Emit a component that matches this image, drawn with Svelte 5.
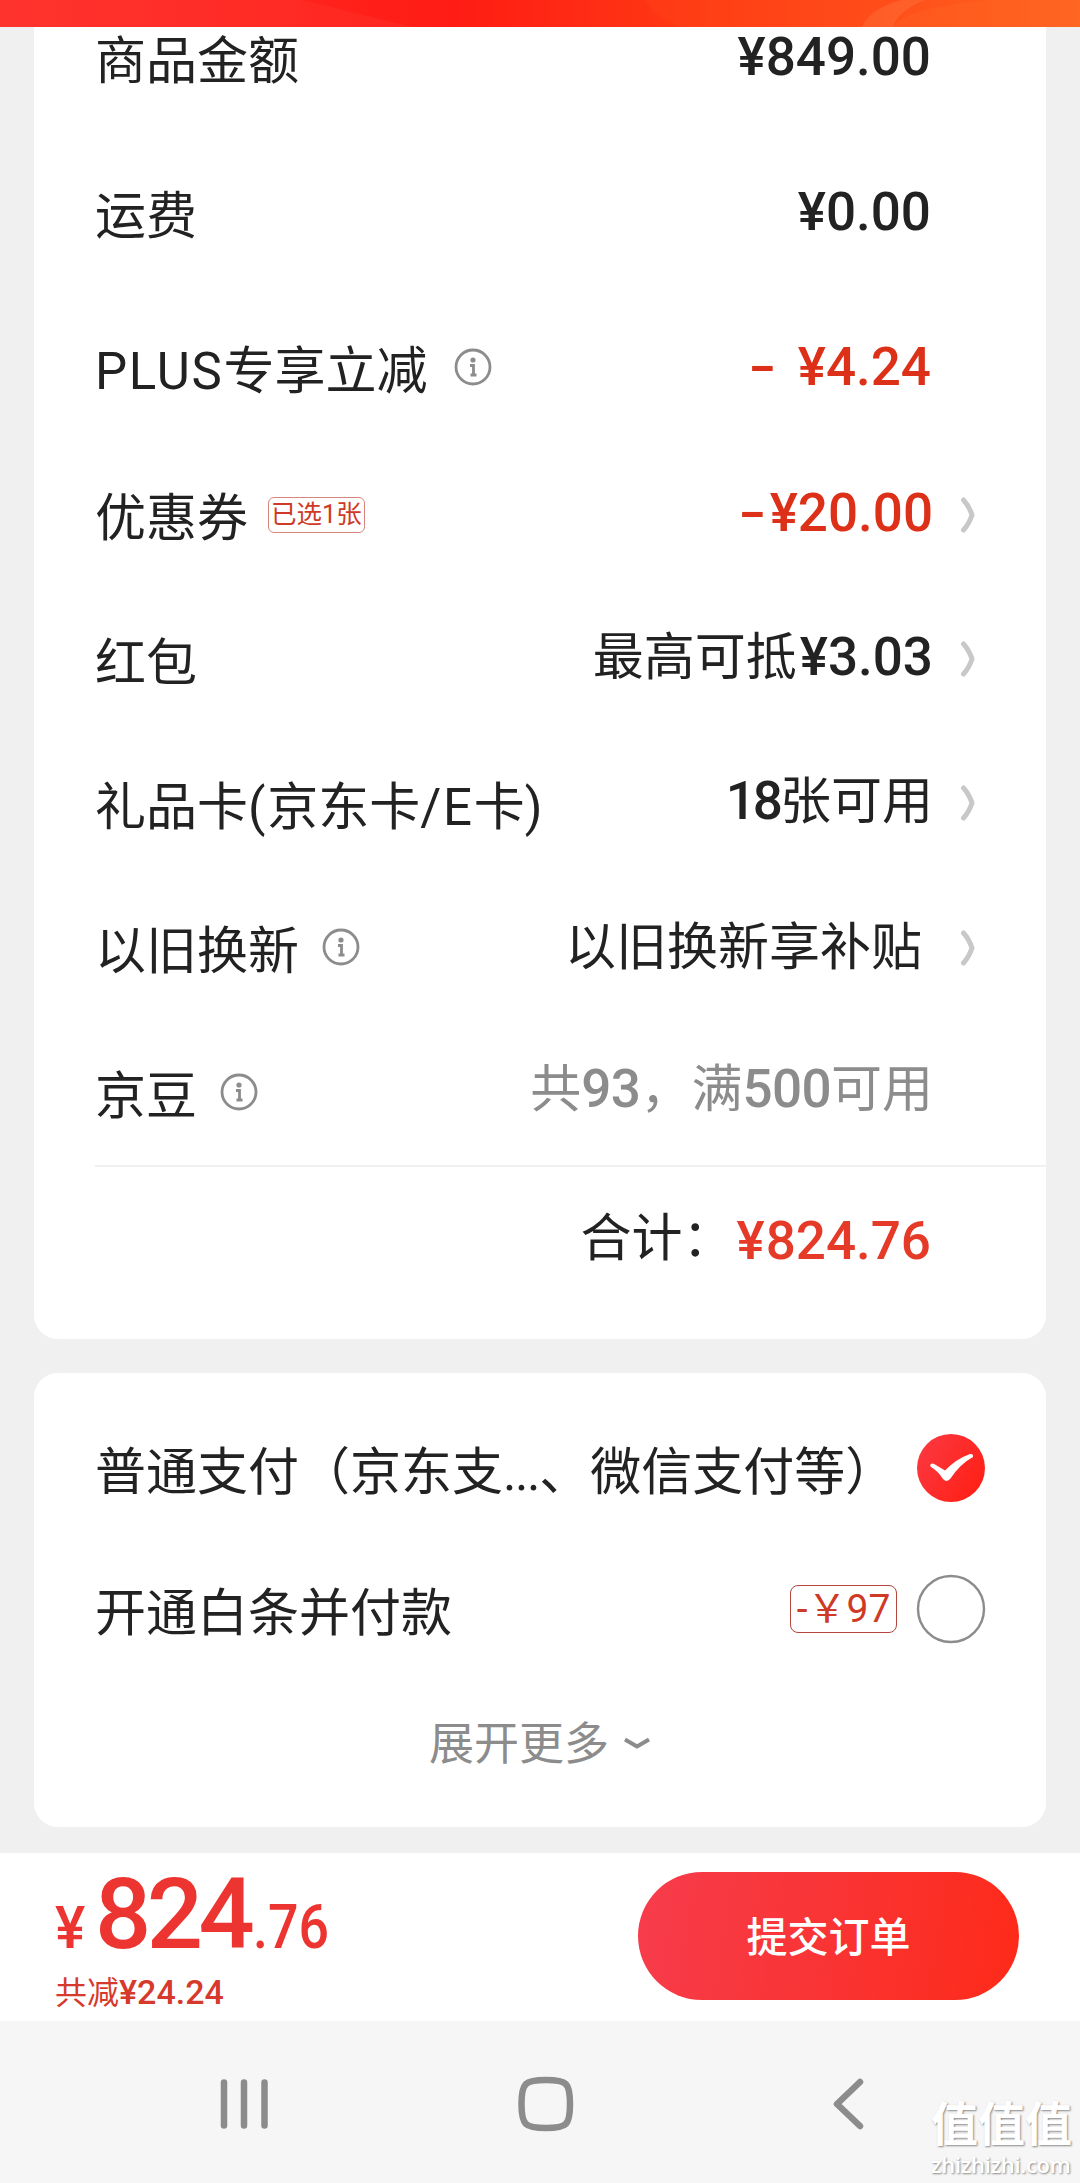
<script lang="ts">
  interface Row {
    label: string;
    info?: boolean;
    tag?: string;
    minus?: '-' | '- ';
    // runs of the value, numbers are set in the heavier face
    value: { text: string; num?: boolean }[];
    tone?: 'red' | 'grey';
    arrow?: boolean;
    inset?: boolean;
  }

  const amounts: Row[] = [
    { label: '商品金额', value: [{ text: '¥849.00', num: true }] },
    { label: '运费', value: [{ text: '¥0.00', num: true }] },
    { label: 'PLUS专享立减', info: true, minus: '- ', value: [{ text: '¥4.24', num: true }], tone: 'red' },
  ];

  const deductions: Row[] = [
    { label: '优惠券', tag: '已选1张', minus: '-', value: [{ text: '¥20.00', num: true }], tone: 'red', arrow: true },
    { label: '红包', value: [{ text: '最高可抵' }, { text: '¥3.03', num: true }], arrow: true },
    { label: '礼品卡(京东卡/E卡)', value: [{ text: '18', num: true }, { text: '张可用' }], arrow: true },
    { label: '以旧换新', info: true, value: [{ text: '以旧换新享补贴' }], arrow: true, inset: true },
    {
      label: '京豆',
      info: true,
      value: [
        { text: '共' },
        { text: '93', num: true },
        { text: '，满' },
        { text: '500', num: true },
        { text: '可用' },
      ],
      tone: 'grey',
    },
  ];

  let method = $state('normal');

  // split a label into latin and CJK runs, latin is spaced a little wider
  const runs = (s: string) => s.match(/[\x21-\x7e]+|[^\x21-\x7e]+/g) ?? [];
</script>

{#snippet line(row: Row)}
  <div class="row">
    <div class="label">
      <span class="text">{#each runs(row.label) as run}<span class:latin={run < '\x7f'}>{run}</span>{/each}</span>
      {#if row.tag}<span class="tag">{row.tag}</span>{/if}
      {#if row.info}
        <svg class="info" viewBox="0 0 38 38" width="38" height="38">
          <circle cx="19" cy="19" r="17" />
          <circle class="dot" cx="19" cy="12" r="2.6" />
          <path d="M16 17.5h3.5v9M16.5 27h6" />
        </svg>
      {/if}
    </div>
    <div class="value {row.tone ?? ''}" class:inset={row.inset}>
      {#if row.minus}<span class="num minus" class:apart={row.minus === '- '}>-</span>{/if}{#each row.value as part}<span class:num={part.num} class:tight={part.text === '18'} class:yuan={part.text[0] === '¥'}>{part.text}</span>{/each}
    </div>
    <div class="arrow">
      {#if row.arrow}
        <svg viewBox="0 0 16 36" width="16" height="36"><path d="M3.5 3Q9 9 12 18Q9 27 3.5 33" /></svg>
      {/if}
    </div>
  </div>
{/snippet}

<div class="screen">
  <header>
    <svg viewBox="0 0 1080 27" width="1080" height="27" preserveAspectRatio="none">
      <path d="M300 0C340 8 370 18 415 27H0V0Z" fill="#ff3a36" opacity=".3" />
      <path d="M645 0C650 10 662 20 680 27H860C866 14 880 5 900 0Z" fill="#ff4a16" opacity=".25" />
      <path d="M862 27C868 14 882 5 902 0H925C905 8 896 17 893 27Z" fill="#ff7a45" opacity=".35" />
      <path d="M893 27C900 14 935 5 990 0H1080V27Z" fill="#ff6a28" opacity=".25" />
    </svg>
  </header>

  <main>
    <section class="card summary">
      <div class="group wide">
        {#each amounts as row}{@render line(row)}{/each}
      </div>
      <div class="group">
        {#each deductions as row}{@render line(row)}{/each}
      </div>
      <div class="total">
        <span>合计：</span>
        <span class="num yuan">¥824.76</span>
      </div>
    </section>

    <section class="card pay">
      <button class="option" onclick={() => (method = 'normal')}>
        <span class="name">普通支付（京东支<span class="dots">...</span>、微信支付等）</span>
        {@render radio(method === 'normal')}
      </button>
      <button class="option" onclick={() => (method = 'baitiao')}>
        <span class="name">开通白条并付款</span>
        <span class="off">-￥97</span>
        {@render radio(method === 'baitiao')}
      </button>
      <button class="more">
        <span>展开更多</span>
        <svg viewBox="0 0 30 16" width="30" height="16"><path d="M3 3.5L15 10.500L27 3.500" /></svg>
      </button>
    </section>
  </main>

  <footer>
    <div class="sum">
      <div class="price"><span class="yen">¥</span><span class="big">824</span><span class="cents">.76</span></div>
      <div class="saved">共减<span>¥24.24</span></div>
    </div>
    <button class="submit">提交订单</button>
  </footer>

  <nav>
    <svg viewBox="0 0 1080 162" width="1080" height="162">
      <path d="M224 61.500V104.500M244 61.500V104.500M264.500 61.500V104.500" stroke-width="6.500" />
      <path d="M546 59C567 59 570 62 570 83S567 107 546 107S521.500 104 521.500 83S525 59 546 59Z" stroke-width="6.500" />
      <path d="M860 61L837 83L860 105" stroke-width="6.500" />
    </svg>
    <div class="mark">
      <div class="mark-name">值值值</div>
      <div class="mark-url">zhizhizhi.com</div>
    </div>
  </nav>
</div>

{#snippet radio(on: boolean)}
  <svg class="radio" viewBox="0 0 70 70" width="70" height="70">
    {#if on}
      <defs>
        <linearGradient id="tick" x1="0" y1="0" x2="1" y2="0.6">
          <stop offset="0" stop-color="#fb3a44" />
          <stop offset="1" stop-color="#ff2118" />
        </linearGradient>
      </defs>
      <circle cx="35" cy="35" r="34" fill="url(#tick)" />
      <path
        d="M14.500 31.500Q16 29.500 19 31.500L29 37.500Q40 26 54 21Q57.500 20.500 57 24Q44 31 34.500 45.500Q31 50 27 46Q22 38 15 34Q13.500 32.500 14.500 31.500Z"
        fill="#fff"
      />
    {:else}
      <circle cx="35" cy="35" r="33" fill="#fff" stroke="#8c8c8c" stroke-width="2.400" />
    {/if}
  </svg>
{/snippet}

<style>
  :global(body) {
    margin: 0;
  }

  .screen {
    width: 1080px;
    height: 2183px;
    display: flex;
    flex-direction: column;
    overflow: hidden;
    background: #f0f0f0;
    color: #222;
    font-family: Roboto, 'Noto Sans CJK SC', sans-serif;
    font-size: 51px;
    line-height: 60px;
    white-space: nowrap;
  }

  button {
    border: 0;
    padding: 0;
    background: none;
    color: inherit;
    font: inherit;
    white-space: nowrap;
  }

  header {
    position: relative;
    z-index: 1;
    flex: none;
    height: 27px;
    background: linear-gradient(90deg, #ff302c, #ff1c14 42%, #ff3a14 65%, #ff6420);
  }

  header svg {
    display: block;
  }

  main {
    display: flex;
    flex-direction: column;
    flex: none;
    height: 1826px;
  }

  .card {
    flex: none;
    box-sizing: border-box;
    width: 1012px;
    margin: 0 34px 34px;
    border-radius: 24px;
    background: #fff;
  }

  /* the list is scrolled a little under the header */
  .summary {
    height: 1359px;
    margin-top: -47px;
    padding-left: 61px;
  }

  .row {
    display: flex;
    align-items: center;
    height: 144.4px;
  }

  .wide .row {
    height: 155px;
  }

  .label {
    flex: 1;
    display: flex;
    align-items: center;
  }

  .text {
    margin-top: 4px;
  }

  .wide .text {
    margin-top: 8px;
  }

  .latin {
    letter-spacing: 1.7px;
  }

  .info {
    margin: -6px 0 0 23px;
    fill: none;
    stroke: #8c8c8c;
    stroke-width: 2.8;
  }

  .wide .info {
    margin: -2px 0 0 27px;
  }

  .info .dot {
    fill: #8c8c8c;
    stroke: none;
  }

  .tag {
    box-sizing: border-box;
    height: 36px;
    margin: -4px 0 0 20px;
    padding: 0 2px;
    border: 1.5px solid #d8867c;
    border-radius: 6px;
    color: #cf3a26;
    font-size: 25.5px;
    line-height: 33px;
  }

  .value {
    margin-top: -8px;
  }

  .wide .value {
    margin-top: 0;
    margin-right: 2px;
  }

  .value.inset {
    margin-top: -5px;
    margin-right: 11px;
  }

  .value.grey {
    margin-top: -10px;
  }

  .num {
    font-size: 53px;
    font-weight: 500;
  }

  .yuan {
    margin-left: 3px;
  }

  /* the currency sign is a bit broader than the digits */
  .yuan::first-letter {
    letter-spacing: 1px;
  }

  .grey .num {
    letter-spacing: -0.6px;
  }

  .tight {
    letter-spacing: -3px;
  }

  .minus {
    display: inline-block;
    margin-right: 1px;
    transform: scaleX(1.5);
    transform-origin: right;
  }

  .minus.apart {
    margin-right: 19px;
  }

  .red {
    color: #dd3018;
  }

  .grey {
    color: #8c8c8c;
  }

  .arrow {
    width: 113px;
    padding-bottom: 5px;
  }

  .arrow svg {
    display: block;
    margin-left: 27px;
    fill: none;
    stroke: #c8c8c8;
    stroke-width: 5;
    stroke-linecap: round;
  }

  .total {
    display: flex;
    align-items: center;
    justify-content: flex-end;
    height: 144px;
    margin-top: -2px;
    padding-right: 115px;
    border-top: 2px solid #f0f0f0;
  }

  .total .num {
    color: #e63a28;
    margin-top: 4px;
  }

  .pay {
    height: 454px;
    padding: 24px 60px 0 61px;
  }

  .option {
    display: flex;
    align-items: center;
    width: 891px;
    height: 141px;
    text-align: left;
  }

  .name {
    flex: 1;
    margin-top: 11px;
  }

  .dots {
    letter-spacing: -1.4px;
  }

  .off {
    box-sizing: border-box;
    width: 107px;
    height: 48px;
    margin-right: 19px;
    border: 1.5px solid #b5443a;
    border-radius: 8px;
    color: #cf3a26;
    font-size: 39px;
    line-height: 46px;
    text-align: center;
  }

  .radio {
    flex: none;
  }

  .more {
    display: flex;
    align-items: center;
    gap: 13px;
    margin: 36px 0 0 334px;
    color: #8c8c8c;
    font-size: 45px;
  }

  .more svg {
    margin-top: -2px;
    fill: none;
    stroke: #8c8c8c;
    stroke-width: 4;
    stroke-linejoin: round;
  }

  footer {
    flex: none;
    display: flex;
    justify-content: space-between;
    box-sizing: border-box;
    height: 168px;
    padding: 19px 61px 0 55px;
    background: #fff;
  }

  .price {
    height: 80px;
    line-height: 85px;
    color: #ec3430;
  }

  .yen {
    display: inline-block;
    width: 40px;
    font-size: 60px;
    font-weight: 500;
    transform: scaleX(0.95);
    transform-origin: left;
  }

  .big {
    font-size: 99px;
    font-weight: 500;
    letter-spacing: -4.5px;
  }

  .cents {
    display: inline-block;
    margin-left: 3px;
    font-size: 61px;
    font-weight: 500;
    transform: scaleX(0.88);
    transform-origin: left;
  }

  .saved {
    height: 40px;
    color: #d63a2c;
    font-size: 32px;
    line-height: 80px;
  }

  .saved span {
    font-size: 34px;
    font-weight: 500;
  }

  .submit {
    width: 381px;
    height: 128px;
    padding-top: 3px;
    border-radius: 64px;
    background: linear-gradient(100deg, #f73c4c, #f93434 50%, #fe2a18);
    color: #fff;
    font-size: 41px;
    font-weight: 500;
  }

  nav {
    position: relative;
    flex: none;
    height: 162px;
    background: #f6f6f6;
  }

  nav svg {
    display: block;
    fill: none;
    stroke: #8c8c8c;
    stroke-linecap: round;
    stroke-linejoin: round;
  }

  .mark {
    position: absolute;
    right: 8px;
    bottom: 6px;
    color: #fff;
    text-shadow: 1px 1px 2px #888;
  }

  .mark-name {
    font-size: 47px;
    font-weight: 700;
    line-height: 52px;
  }

  .mark-url {
    font-family: 'Open Sans', sans-serif;
    font-size: 22px;
    font-weight: 600;
    line-height: 26px;
    letter-spacing: -0.3px;
  }
</style>
